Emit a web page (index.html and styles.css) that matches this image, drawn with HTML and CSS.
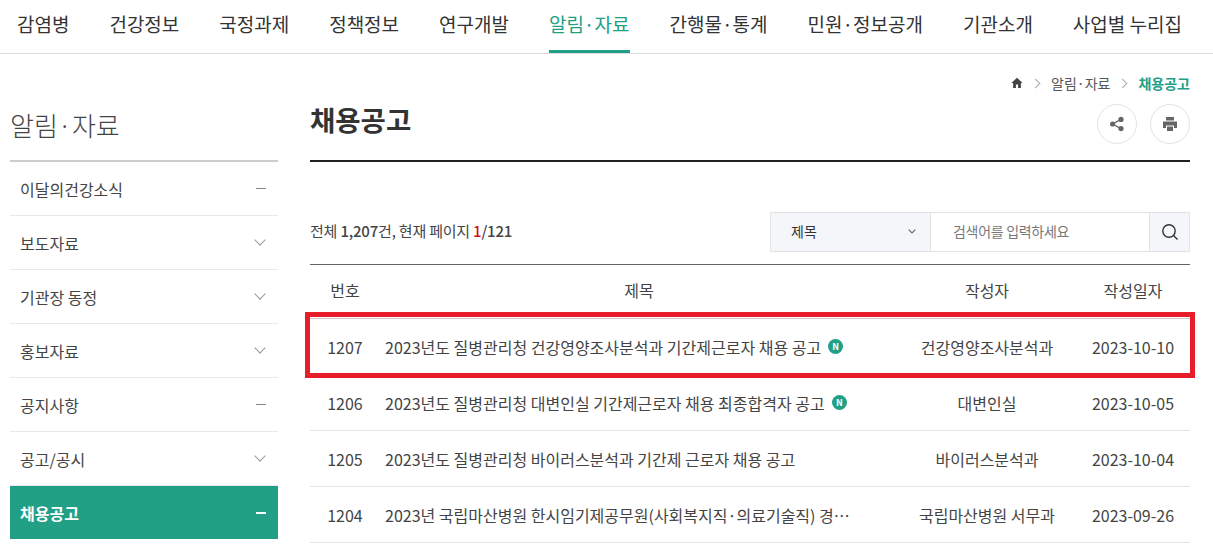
FILE: index.html

```html
<html>
	<head>
		<meta charset="utf-8">
		<title>채용공고</title>
		<link rel="stylesheet" href="styles.css">
	</head>
	<body>
		<div class="gnb">
			<a>감염병</a>
			<a>건강정보</a>
			<a>국정과제</a>
			<a>정책정보</a>
			<a>연구개발</a>
			<a class="on">알림·자료</a>
			<a>간행물·통계</a>
			<a>민원·정보공개</a>
			<a>기관소개</a>
			<a>사업별 누리집</a>
		</div>
		<div class="wrap">
			<div class="side">
				<h2>알림·자료</h2>
				<ul class="lnb">
					<li>이달의건강소식<i class="minus"></i></li>
					<li>보도자료<i class="arr"></i></li>
					<li>기관장 동정<i class="arr"></i></li>
					<li>홍보자료<i class="arr"></i></li>
					<li>공지사항<i class="minus"></i></li>
					<li>공고/공시<i class="arr"></i></li>
					<li class="on">채용공고<i class="minus"></i></li>
				</ul>
			</div>
			<div class="main">
				<div class="crumb">
					<svg class="home" width="12" height="12" viewBox="0 0 12 12"><path d="M6 .8 .4 6h1.7v5h2.8V7.6h2.2V11h2.8V6h1.7z" fill="#444"/></svg>
					<i class="sep"></i>
					<span>알림·자료</span>
					<i class="sep"></i>
					<b>채용공고</b>
				</div>
				<div class="title">
					<h1>채용공고</h1>
					<div class="tools">
						<span class="round">
							<svg width="16" height="16" viewBox="0 0 16 16"><g fill="#666"><circle cx="12" cy="3.4" r="2.6"/><circle cx="3.6" cy="8" r="2.6"/><circle cx="12" cy="12.6" r="2.6"/></g><path d="M12 3.4 3.6 8l8.4 4.6" fill="none" stroke="#666" stroke-width="1.4"/></svg>
						</span>
						<span class="round">
							<svg width="16" height="16" viewBox="0 0 16 16"><path d="M4 1h8v3.5H4zM1 5.5h14V12h-3V9.5H4V12H1zM5 10.5h6V15H5z" fill="#666"/></svg>
						</span>
					</div>
				</div>
				<div class="board-top">
					<div class="total">전체 <b>1,207</b>건, 현재 페이지 <b><em>1</em>/121</b></div>
					<div class="search">
						<div class="sel">제목<svg width="8" height="5" viewBox="0 0 8 5"><path d="M.7.7 4 4l3.3-3.3" fill="none" stroke="#666" stroke-width="1.1"/></svg></div>
						<div class="inp">검색어를 입력하세요</div>
						<div class="btn"><svg width="18" height="18" viewBox="0 0 18 18"><circle cx="8" cy="8" r="6.2" fill="none" stroke="#333" stroke-width="1.4"/><path d="m12.5 12.5 4 4" stroke="#333" stroke-width="1.4"/></svg></div>
					</div>
				</div>
				<table class="list">
					<colgroup><col class="c1"><col class="c2"><col class="c3"><col class="c4"></colgroup>
					<thead>
						<tr><th>번호</th><th>제목</th><th>작성자</th><th>작성일자</th></tr>
					</thead>
					<tbody>
						<tr><td>1207</td><td><div class="subj">2023년도 질병관리청 건강영양조사분석과 기간제근로자 채용 공고<span class="new">N</span></div></td><td>건강영양조사분석과</td><td>2023-10-10</td></tr>
						<tr><td>1206</td><td><div class="subj">2023년도 질병관리청 대변인실 기간제근로자 채용 최종합격자 공고<span class="new">N</span></div></td><td>대변인실</td><td>2023-10-05</td></tr>
						<tr><td>1205</td><td><div class="subj">2023년도 질병관리청 바이러스분석과 기간제 근로자 채용 공고</div></td><td>바이러스분석과</td><td>2023-10-04</td></tr>
						<tr><td>1204</td><td><div class="subj">2023년 국립마산병원 한시임기제공무원(사회복지직·의료기술직) 경…</div></td><td>국립마산병원 서무과</td><td>2023-09-26</td></tr>
					</tbody>
				</table>
			</div>
		</div>
		<div class="redbox"></div>
	</body>
</html>
```

FILE: styles.css

```css
html, body{
	margin:0;
	padding:0;
	height:545px;
	overflow:hidden;
	background:#fff;
}

body{
	position:relative;
	font-family:"Noto Sans CJK KR", "Noto Sans", sans-serif;
	color:#444;
}

ul{
	margin:0;
	padding:0;
	list-style:none;
}

h1, h2{
	margin:0;
}

.gnb{
	display:flex;
	justify-content:space-between;
	height:53px;
	padding:0 31px 0 17px;
	border-bottom:1px solid #ddd;
	font-size:19px;
	line-height:48px;
	color:#333;
}

.gnb a{
	display:block;
	height:53px;
	white-space:nowrap;
}

.gnb a.on{
	height:50px;
	color:#21a086;
	border-bottom:3px solid #21a086;
}

.wrap{
	display:flex;
	padding:0 23px 0 10px;
}

.side{
	width:268px;
	margin-right:32px;
}

.side h2{
	height:108px;
	padding-top:49px;
	box-sizing:border-box;
	border-bottom:2px solid #ccc;
	font-size:26px;
	font-weight:300;
	line-height:44px;
	color:#444;
}

.lnb li{
	display:flex;
	justify-content:space-between;
	align-items:center;
	height:53px;
	padding:0 12px 0 10px;
	border-bottom:1px solid #e8e8e8;
	font-size:16px;
	color:#444;
}

.lnb li.on{
	border-bottom:0;
	background:#21a086;
	color:#fff;
	font-weight:700;
}

.minus{
	width:10px;
	height:1px;
	background:#888;
}

.lnb .on .minus{
	height:2px;
	background:#fff;
}

.arr{
	width:7px;
	height:7px;
	margin:-5px 2px 0 0;
	border-right:1px solid #999;
	border-bottom:1px solid #999;
	transform:rotate(45deg);
}

.main{
	width:880px;
}

.crumb{
	display:flex;
	justify-content:flex-end;
	align-items:center;
	gap:9px;
	height:20px;
	margin-top:19px;
	font-size:14px;
	color:#555;
}

.crumb b{
	color:#21a086;
}

.sep{
	width:6px;
	height:6px;
	margin-right:3px;
	border-top:1px solid #aaa;
	border-right:1px solid #aaa;
	transform:rotate(45deg);
}

.title{
	display:flex;
	justify-content:space-between;
	height:67px;
	border-bottom:2px solid #222;
}

.title h1{
	padding-top:6px;
	font-size:27.5px;
	font-weight:700;
	line-height:40px;
	color:#333;
}

.tools{
	display:flex;
	gap:13px;
	padding-top:11px;
}

.round{
	display:flex;
	justify-content:center;
	align-items:center;
	width:40px;
	height:40px;
	border:1px solid #e2e2e2;
	border-radius:50%;
	box-sizing:border-box;
}

.board-top{
	display:flex;
	justify-content:space-between;
	align-items:center;
	height:40px;
	margin-top:50px;
	margin-bottom:12px;
}

.total{
	padding-bottom:3px;
	font-size:15px;
	color:#444;
	letter-spacing:-0.2px;
}

.total b{
	font-weight:500;
}

.total em{
	font-style:normal;
	color:#d0121f;
}

.search{
	display:flex;
	width:420px;
	height:40px;
	box-sizing:border-box;
	border:1px solid #e2e2e2;
	font-size:14px;
}

.sel{
	display:flex;
	justify-content:space-between;
	align-items:center;
	width:160px;
	padding:0 14px 2px 20px;
	box-sizing:border-box;
	background:#f4f6f9;
	border-right:1px solid #e2e2e2;
	color:#333;
}

.inp{
	flex:1;
	padding-left:22px;
	line-height:36px;
	letter-spacing:-0.3px;
	color:#777;
}

.btn{
	display:flex;
	justify-content:center;
	align-items:center;
	width:39px;
	background:#f4f6f9;
	border-left:1px solid #e2e2e2;
}

.list{
	width:880px;
	border-collapse:collapse;
	table-layout:fixed;
	border-top:1px solid #666;
	font-size:16px;
	text-align:center;
	color:#444;
}

.c1{
	width:70px;
}

.c3{
	width:178px;
}

.c4{
	width:114px;
}

.list th{
	height:54px;
	padding:0 0 4px;
	font-weight:400;
	border-bottom:1px solid #ccc;
}

.list td{
	height:56px;
	padding:0;
	border-bottom:1px solid #e4e4e4;
}

.subj{
	display:flex;
	align-items:center;
	text-align:left;
	padding-left:5px;
	white-space:nowrap;
}

.new{
	flex:none;
	width:15px;
	height:15px;
	margin-left:7px;
	border-radius:50%;
	background:#21a086;
	color:#fff;
	font-size:9px;
	font-weight:700;
	line-height:15px;
	text-align:center;
}

.redbox{
	position:absolute;
	left:305px;
	top:312px;
	width:890px;
	height:66px;
	box-sizing:border-box;
	border:5px solid #e71d2b;
}
```
